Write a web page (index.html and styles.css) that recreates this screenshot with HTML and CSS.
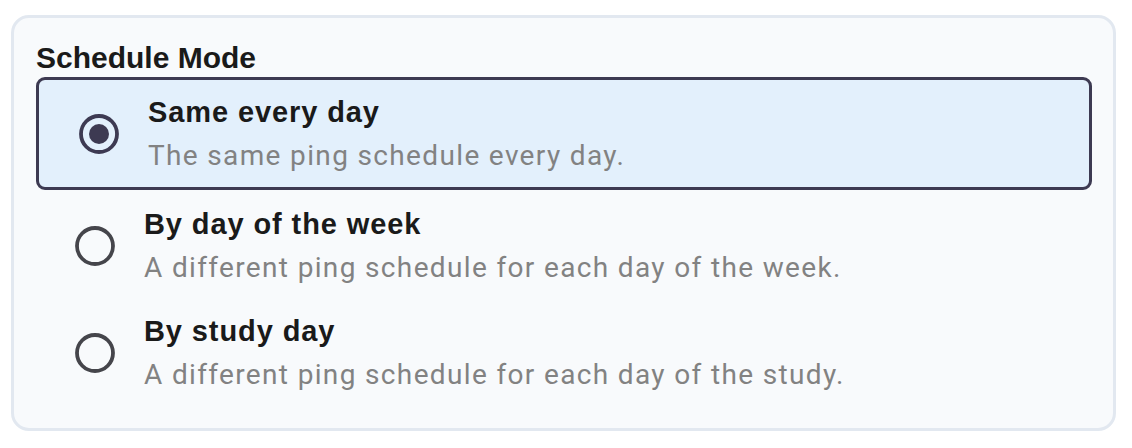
FILE: index.html
```html
<!DOCTYPE html>
<html lang="en">
<head>
<meta charset="utf-8">
<title>Schedule Mode</title>
<link rel="stylesheet" href="styles.css">
</head>
<body>
<div class="card">
  <div class="heading">Schedule Mode</div>
  <div class="options">
    <div class="option selected">
      <svg class="radio" viewBox="0 0 40 40" width="40" height="40" aria-hidden="true">
        <circle cx="20" cy="20" r="18" fill="none" stroke="#3d3a52" stroke-width="3.8"/>
        <circle cx="20" cy="20" r="10" fill="#3d3a52"/>
      </svg>
      <div class="text">
        <div class="title">Same every day</div>
        <div class="desc">The same ping schedule every day.</div>
      </div>
    </div>
    <div class="option">
      <svg class="radio" viewBox="0 0 40 40" width="40" height="40" aria-hidden="true">
        <circle cx="20" cy="20" r="18" fill="none" stroke="#45454b" stroke-width="3.8"/>
      </svg>
      <div class="text">
        <div class="title">By day of the week</div>
        <div class="desc">A different ping schedule for each day of the week.</div>
      </div>
    </div>
    <div class="option">
      <svg class="radio" viewBox="0 0 40 40" width="40" height="40" aria-hidden="true">
        <circle cx="20" cy="20" r="18" fill="none" stroke="#45454b" stroke-width="3.8"/>
      </svg>
      <div class="text">
        <div class="title">By study day</div>
        <div class="desc">A different ping schedule for each day of the study.</div>
      </div>
    </div>
  </div>
</div>
</body>
</html>
```
FILE: styles.css
```css
html, body {
  margin: 0;
  padding: 0;
  background: #ffffff;
}

body {
  padding: 15px 16px 17px 11px;
}

.card {
  box-sizing: border-box;
  height: 416px;
  background: #f8fafc;
  border: 3px solid #e2e8f0;
  border-radius: 18px;
  padding: 22px 21px 20px 22px;
}

.heading {
  font-family: "Liberation Sans", Arial, sans-serif;
  font-weight: 700;
  font-size: 30px;
  line-height: 36px;
  color: #1a1a1a;
  margin-bottom: 1px;
}

.options {
  display: flex;
  flex-direction: column;
}

.option {
  display: flex;
  align-items: center;
  padding: 13.5px 0 13.5px 39px;
}

.option.selected {
  background: #e3f0fc;
  border: 3px solid #3d3a52;
  border-radius: 9px;
  padding-left: 40px;
  margin-bottom: 2px;
}

.radio {
  flex: none;
  display: block;
  width: 40px;
  height: 40px;
  margin-right: 29px;
}

.text {
  display: flex;
  flex-direction: column;
  gap: 8px;
}

.title {
  font-family: "Liberation Sans", Arial, sans-serif;
  font-weight: 700;
  font-size: 29px;
  line-height: 36px;
  letter-spacing: 0.9px;
  color: #1a1a1a;
}

.desc {
  font-family: Roboto, "Noto Sans", sans-serif;
  font-weight: 400;
  font-size: 28px;
  line-height: 36px;
  letter-spacing: 1.35px;
  color: #828282;
}
```
